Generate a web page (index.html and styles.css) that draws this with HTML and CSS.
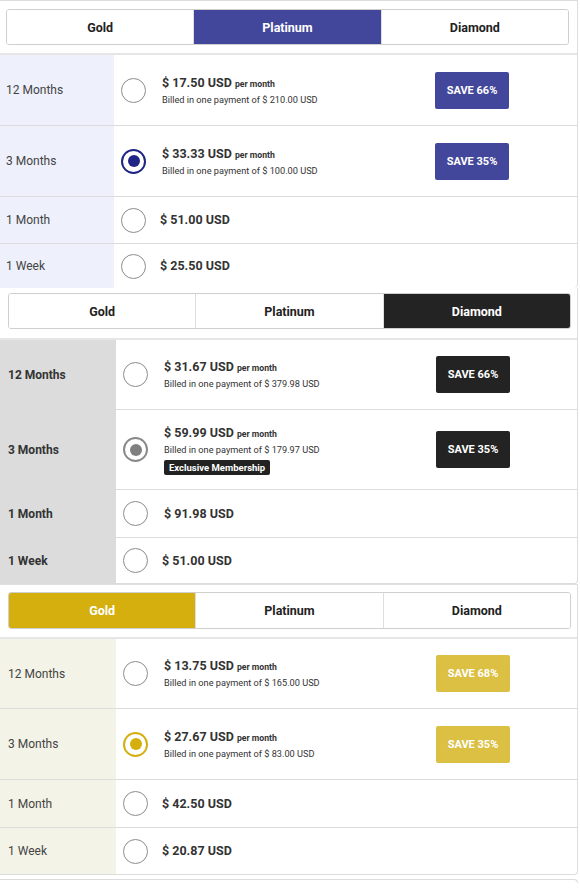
FILE: index.html
```html
<!DOCTYPE html>
<html>
<head>
<meta charset="utf-8">
<link rel="stylesheet" href="styles.css">
</head>
<body>
<section class="panel p-plat">
  <div class="head">
    <div class="tabs">
      <div class="tab">Gold</div>
      <div class="tab active">Platinum</div>
      <div class="tab">Diamond</div>
    </div>
  </div>
  <div class="rows">
    <div class="row r-a">
      <div class="label">12 Months</div>
      <div class="radio"></div>
      <div class="info">
        <div class="price">$ 17.50 USD <span class="per">per month</span></div>
        <div class="billed">Billed in one payment of $ 210.00 USD</div>
      </div>
      <div class="save">SAVE 66%</div>
    </div>
    <div class="row r-b">
      <div class="label">3 Months</div>
      <div class="radio on"></div>
      <div class="info">
        <div class="price">$ 33.33 USD <span class="per">per month</span></div>
        <div class="billed">Billed in one payment of $ 100.00 USD</div>
      </div>
      <div class="save">SAVE 35%</div>
    </div>
    <div class="row r-c">
      <div class="label">1 Month</div>
      <div class="radio"></div>
      <div class="info shift">
        <div class="price">$ 51.00 USD</div>
      </div>
    </div>
    <div class="row r-d">
      <div class="label">1 Week</div>
      <div class="radio"></div>
      <div class="info shift">
        <div class="price">$ 25.50 USD</div>
      </div>
    </div>
  </div>
</section>

<section class="panel p-dia">
  <div class="head">
    <div class="tabs">
      <div class="tab">Gold</div>
      <div class="tab">Platinum</div>
      <div class="tab active">Diamond</div>
    </div>
  </div>
  <div class="rows">
    <div class="row r-a">
      <div class="label">12 Months</div>
      <div class="radio"></div>
      <div class="info">
        <div class="price">$ 31.67 USD <span class="per">per month</span></div>
        <div class="billed">Billed in one payment of $ 379.98 USD</div>
      </div>
      <div class="save">SAVE 66%</div>
    </div>
    <div class="row r-b">
      <div class="label">3 Months</div>
      <div class="radio on"></div>
      <div class="info">
        <div class="price">$ 59.99 USD <span class="per">per month</span></div>
        <div class="billed">Billed in one payment of $ 179.97 USD</div>
        <div class="badge">Exclusive Membership</div>
      </div>
      <div class="save">SAVE 35%</div>
    </div>
    <div class="row r-c">
      <div class="label">1 Month</div>
      <div class="radio"></div>
      <div class="info">
        <div class="price">$ 91.98 USD</div>
      </div>
    </div>
    <div class="row r-d">
      <div class="label">1 Week</div>
      <div class="radio"></div>
      <div class="info shift">
        <div class="price">$ 51.00 USD</div>
      </div>
    </div>
  </div>
</section>

<section class="panel p-gold">
  <div class="head">
    <div class="tabs">
      <div class="tab active">Gold</div>
      <div class="tab">Platinum</div>
      <div class="tab">Diamond</div>
    </div>
  </div>
  <div class="rows">
    <div class="row r-a">
      <div class="label">12 Months</div>
      <div class="radio"></div>
      <div class="info">
        <div class="price">$ 13.75 USD <span class="per">per month</span></div>
        <div class="billed">Billed in one payment of $ 165.00 USD</div>
      </div>
      <div class="save">SAVE 68%</div>
    </div>
    <div class="row r-b">
      <div class="label">3 Months</div>
      <div class="radio on"></div>
      <div class="info">
        <div class="price">$ 27.67 USD <span class="per">per month</span></div>
        <div class="billed">Billed in one payment of $ 83.00 USD</div>
      </div>
      <div class="save">SAVE 35%</div>
    </div>
    <div class="row r-c">
      <div class="label">1 Month</div>
      <div class="radio"></div>
      <div class="info shift">
        <div class="price">$ 42.50 USD</div>
      </div>
    </div>
    <div class="row r-d">
      <div class="label">1 Week</div>
      <div class="radio"></div>
      <div class="info shift">
        <div class="price">$ 20.87 USD</div>
      </div>
    </div>
  </div>
</section>
<div class="next"></div>
</body>
</html>
```

FILE: styles.css
```css
* { box-sizing: border-box; }
body {
  margin: 0;
  font-family: Roboto, "Liberation Sans", Arial, sans-serif;
  color: #333;
  background: #fff;
}
.panel {
  width: 578px;
  border-right: 1px solid #dcdcdc;
  border-bottom: 1px solid #dcdcdc;
  border-bottom-right-radius: 4px;
  overflow: hidden;
}
.head {
  padding: 8px;
}
.tabs {
  display: flex;
  height: 36px;
  border: 1px solid #cfcfcf;
  border-radius: 3px;
  overflow: hidden;
}
.tab {
  flex: 1;
  display: flex;
  align-items: center;
  justify-content: center;
  font-size: 12.5px;
  font-weight: 700;
  color: #222;
  background: #fff;
  border-left: 1px solid #dedede;
}
.tab:first-child { border-left: none; }
.rows {
  border-top: 2px solid #e6e6e6;
}
.row {
  display: flex;
  align-items: center;
  border-top: 1px solid #dcdcdc;
}
.row:first-child { border-top: none; }
.label {
  align-self: stretch;
  display: flex;
  align-items: center;
  width: 116px;
  padding-left: 8px;
  font-size: 12px;
  color: #444;
}
.radio {
  width: 25px;
  height: 25px;
  margin-left: 7px;
  border: 1.5px solid #8c8c8c;
  border-radius: 50%;
  display: flex;
  align-items: center;
  justify-content: center;
  flex: none;
}
.radio.on::after {
  content: "";
  width: 12px;
  height: 12px;
  border-radius: 50%;
}
.info {
  flex: 1;
  margin-left: 16px;
}
.info.shift { margin-left: 14px; }
.price {
  font-size: 12.5px;
  font-weight: 700;
  color: #333;
  line-height: 16px;
}
.per {
  font-size: 8.7px;
  font-weight: 700;
}
.billed {
  font-size: 9.2px;
  color: #333;
  line-height: 13px;
  margin-top: 1px;
}
.badge {
  display: inline-block;
  margin-top: 4px;
  height: 15px;
  line-height: 15px;
  padding: 0 5px;
  background: #222;
  color: #fff;
  font-size: 9.5px;
  font-weight: 700;
  border-radius: 2px;
}
.save {
  width: 74px;
  height: 37px;
  margin-right: 67px;
  display: flex;
  align-items: center;
  justify-content: center;
  color: #fff;
  font-size: 11px;
  font-weight: 700;
  border-radius: 2px;
}

/* Platinum */
.p-plat { border-top: 1px solid #dcdcdc; border-bottom: none; }
.p-plat .head { padding: 8px 8px 8px 6px; }
.p-plat .tab.active { background: #43479b; color: #fff; }
.p-plat .label { width: 114px; padding-left: 6px; background: #eef0fb; }
.p-plat .save { background: #43479b; margin-right: 68px; }
.p-plat .radio.on { border: 2px solid #1f2585; }
.p-plat .radio.on::after { background: #1f2585; }
.p-plat .r-a { height: 70px; }
.p-plat .r-b { height: 71px; }
.p-plat .r-c { height: 47px; }
.p-plat .r-d { height: 45px; }

/* Diamond */
.p-dia .head { padding: 5px 6px 9px 8px; }
.p-dia .tabs { height: 36px; }
.p-dia .tab.active { background: #232323; color: #fff; }
.p-dia .label { background: #dcdcdc; font-weight: 700; color: #333; }
.p-dia .save { background: #232323; }
.p-dia .radio.on { border: 2px solid #8a8a8a; }
.p-dia .radio.on::after { background: #808080; }
.p-dia .r-a { height: 69px; }
.p-dia .r-b { height: 80px; }
.p-dia .r-c { height: 48px; }
.p-dia .r-d { height: 46px; }

/* Gold */
.p-gold { border-top: 1px solid #e0e0e0; }
.p-gold .head { padding: 7px 6px 8px 8px; }
.p-gold .tabs { height: 37px; }
.p-gold .tab.active { background: #d4af0e; color: #fff; }
.p-gold .label { background: #f4f3e8; }
.p-gold .save { background: #dcc043; }
.p-gold .radio.on { border: 2px solid #d4af0e; }
.p-gold .radio.on::after { background: #d4af0e; }
.p-gold .r-a { height: 69px; }
.p-gold .r-b { height: 71px; }
.p-gold .r-c { height: 48px; }
.p-gold .r-d { height: 47px; }

.next {
  width: 578px;
  height: 4px;
  margin-top: 4px;
  border-top: 1px solid #dcdcdc;
  border-right: 1px solid #dcdcdc;
  border-top-right-radius: 4px;
}
```
